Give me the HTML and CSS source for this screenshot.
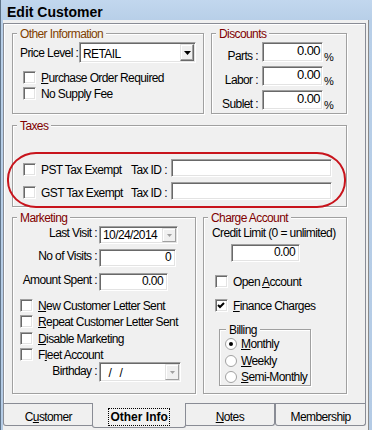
FILE: index.html
```html
<!DOCTYPE html>
<html>
<head>
<meta charset="utf-8">
<title>Edit Customer</title>
<link rel="stylesheet" href="styles.css">
</head>
<body>
<div class="window">
  <div class="titlebar">Edit Customer</div>
  <div class="client">
    <div class="page">
      <div class="row row1">
        <div class="group g-other">
          <div class="legend brown">Other Information</div>
          <div class="price">
            <span class="lbl">Price Level :</span>
            <div class="input combo combo-price">
              <span class="val">RETAIL</span>
              <span class="dd"><svg width="7" height="4" viewBox="0 0 7 4"><polygon points="0,0 7,0 3.5,4" fill="#000"/></svg></span>
            </div>
          </div>
          <div class="checks checks-other">
            <div class="chk"><span class="box"></span><span><u>P</u>urchase Order Required</span></div>
            <div class="chk"><span class="box"></span><span>No Supply Fee</span></div>
          </div>
        </div>
        <div class="group g-disc">
          <div class="legend">Discounts</div>
          <div class="disc-rows">
            <div class="disc-row"><span class="dlbl">Parts :</span><span class="input num dinput">0.00</span><span class="pct">%</span></div>
            <div class="disc-row"><span class="dlbl">Labor :</span><span class="input num dinput">0.00</span><span class="pct">%</span></div>
            <div class="disc-row"><span class="dlbl">Sublet :</span><span class="input num dinput">0.00</span><span class="pct">%</span></div>
          </div>
        </div>
      </div>

      <div class="group g-tax">
        <div class="legend">Taxes</div>
        <div class="tax-rows">
          <div class="tax-row"><span class="box"></span><span class="tname">PST Tax Exempt</span><span class="tid">Tax ID :</span><span class="input tinput"></span></div>
          <div class="tax-row"><span class="box"></span><span class="tname">GST Tax Exempt</span><span class="tid">Tax ID :</span><span class="input tinput"></span></div>
        </div>
        <div class="annot"></div>
      </div>

      <div class="row row3">
        <div class="group g-mkt">
          <div class="legend">Marketing</div>
          <div class="mrow mrow-visit">
            <span class="mlbl">Last Visit :</span>
            <div class="input combo combo-visit">
              <span class="val">10/24/2014</span>
              <span class="dd dd-dis"><svg width="5" height="3" viewBox="0 0 5 3"><polygon points="0,0 5,0 2.5,3" fill="#a0a0a0"/></svg></span>
            </div>
          </div>
          <div class="mrow mrow-count">
            <span class="mlbl">No of Visits :</span>
            <span class="input num minput w77">0</span>
          </div>
          <div class="mrow mrow-amt">
            <span class="mlbl">Amount Spent :</span>
            <span class="input num minput w69">0.00</span>
          </div>
          <div class="checks checks-mkt">
            <div class="chk"><span class="box"></span><span><u>N</u>ew Customer Letter Sent</span></div>
            <div class="chk c2"><span class="box"></span><span><u>R</u>epeat Customer Letter Sent</span></div>
            <div class="chk c3"><span class="box"></span><span><u>D</u>isable Marketing</span></div>
            <div class="chk c2"><span class="box"></span><span>F<u>l</u>eet Account</span></div>
          </div>
          <div class="mrow mrow-bday">
            <span class="mlbl">Birthday :</span>
            <div class="input combo combo-bday">
              <span class="val bval">  /   /</span>
              <span class="dd dd-dis"><svg width="5" height="3" viewBox="0 0 5 3"><polygon points="0,0 5,0 2.5,3" fill="#a0a0a0"/></svg></span>
            </div>
          </div>
        </div>
        <div class="group g-charge">
          <div class="legend">Charge Account</div>
          <div class="credit">Credit Limit (0 = unlimited)</div>
          <span class="input num cinput">0.00</span>
          <div class="chk open"><span class="box"></span><span>Open <u>A</u>ccount</span></div>
          <div class="chk fin"><span class="box"><svg width="11" height="11" viewBox="0 0 11 11"><polyline points="2,5 4,7 8,3" fill="none" stroke="#000" stroke-width="2"/></svg></span><span><u>F</u>inance Charges</span></div>
          <div class="group g-bill">
            <div class="legend blk">Billing</div>
            <div class="radio r1"><svg class="rb" width="12" height="12" viewBox="0 0 12 12"><circle cx="6" cy="6" r="5.5" fill="#fff" stroke="#a0a0a0"/><circle cx="6" cy="6" r="2" fill="#000"/></svg><span><u>M</u>onthly</span></div>
            <div class="radio r2"><svg class="rb" width="12" height="12" viewBox="0 0 12 12"><circle cx="6" cy="6" r="5.5" fill="#fff" stroke="#a0a0a0"/></svg><span><u>W</u>eekly</span></div>
            <div class="radio r3"><svg class="rb" width="12" height="12" viewBox="0 0 12 12"><circle cx="6" cy="6" r="5.5" fill="#fff" stroke="#a0a0a0"/></svg><span><u>S</u>emi-Monthly</span></div>
          </div>
        </div>
      </div>
    </div>
    <div class="tabs">
      <div class="tab">C<u>u</u>stomer</div>
      <div class="tab sel"><span class="focus">Other Info</span></div>
      <div class="tab"><u>N</u>otes</div>
      <div class="tab">Membership</div>
    </div>
  </div>
</div>
</body>
</html>
```
FILE: styles.css
```css
* { box-sizing: border-box; }
html, body { margin: 0; padding: 0; }
body {
  width: 372px; height: 430px; overflow: hidden;
  background: #f0f0f0;
  font-family: "Liberation Sans", Arial, sans-serif;
  font-size: 12px; line-height: 14px; color: #000;
  letter-spacing: -0.6px;
  white-space: nowrap;
}
u { text-decoration: underline; text-underline-offset: 1px; }

.window {
  width: 372px; height: 430px;
  display: flex; flex-direction: column;
  background: linear-gradient(180deg, #c2d7ee 0, #b8cfe8 20px, #b4cbe5 100%);
  border-left: 1px solid #61758a;
  padding: 0 3px 0 2px;
}
.titlebar {
  height: 20px; flex: none;
  padding: 5px 0 0 4px;
  font: bold 14px/14px "Liberation Sans", Arial, sans-serif;
  letter-spacing: 0;
  color: #000;
}
.client {
  flex: 1;
  background: #f0f0f0;
  padding: 3px 2px 0 0;
  border-right: 1px solid #8a8a8a;
  display: flex; flex-direction: column;
}
.page {
  border: 1px solid #898c95;
  box-shadow: inset 1px 1px 0 #fff;
  padding: 9px 18px 9px 8px;
  position: relative;
}

.row { display: flex; gap: 7px; }
.row1 { height: 81px; }
.row3 { height: 177px; margin-top: 10px; }

.group {
  border: 1px solid #a0a0a0;
  box-shadow: inset 1px 1px 0 #fff, 1px 1px 0 #fff;
  position: relative;
}
.legend {
  width: max-content;
  margin: -7px 0 0 4px;
  padding: 0 3px;
  background: #f0f0f0;
  color: #800000;
  line-height: 14px;
}
.legend.brown { color: #804000; }
.legend.blk { color: #000; margin-left: 6px; }

.g-other { width: 192px; }
.g-disc { width: 136px; }
.g-tax { height: 82px; margin-top: 11px; }
.g-mkt { width: 184px; }
.g-charge { width: 144px; }

/* controls */
.input {
  display: block;
  background: #fff;
  border: 1px solid;
  border-color: #a0a0a0 #fff #fff #a0a0a0;
  box-shadow: inset 1px 1px 0 #696969, inset -1px -1px 0 #e3e3e3;
  padding: 1px 4px 0 4px;
  line-height: 12px;
  font-size: 12px;
}
.num { text-align: right; }
.box {
  width: 13px; height: 13px; flex: none;
  background: #fff;
  border: 1px solid;
  border-color: #a0a0a0 #fff #fff #a0a0a0;
  box-shadow: inset 1px 1px 0 #696969, inset -1px -1px 0 #e3e3e3;
  display: flex; align-items: center; justify-content: center;
}
.box svg { display: block; }
.combo { display: flex; padding: 1px; }
.combo .val { flex: 1; padding: 1px 0 0 2px; }
.dd {
  width: 14px; flex: none;
  background: #f0f0f0;
  border: 1px solid;
  border-color: #e3e3e3 #696969 #696969 #e3e3e3;
  box-shadow: inset -1px -1px 0 #a0a0a0, inset 1px 1px 0 #fff;
  display: flex; align-items: center; justify-content: center;
}
.dd svg { display: block; }
.dd-dis { border-color: #e3e3e3 #a0a0a0 #a0a0a0 #e3e3e3; box-shadow: inset 1px 1px 0 #fff; }

.chk { display: flex; align-items: center; height: 13px; gap: 5px; }

/* other info */
.price { display: flex; align-items: center; height: 21px; margin-top: 1px; padding-left: 7px; }
.price .lbl { width: 59px; }
.combo-price { width: 117px; height: 21px; }
.combo-price .val { padding-top: 3px; line-height: 14px; }
.checks-other { margin-top: 8px; padding-left: 10px; display: flex; flex-direction: column; gap: 3px; }

/* discounts */
.disc-rows { margin-top: 1px; display: flex; flex-direction: column; gap: 4px; }
.disc-row { display: flex; height: 20px; }
.dlbl { width: 46px; text-align: right; align-self: flex-end; line-height: 14px; margin-bottom: -1px; }
.dinput { width: 61px; height: 20px; margin-left: 4px; font-size: 13px; line-height: 13px; padding-top: 1px; padding-right: 2px; }
.pct { align-self: flex-end; font-size: 11px; line-height: 12px; margin-left: 1px; margin-bottom: -1px; }

/* taxes */
.tax-rows { margin-top: 26px; padding-left: 10px; display: flex; flex-direction: column; gap: 5px; }
.tax-row { display: flex; align-items: flex-end; height: 18px; }
.tax-row .box { margin-bottom: 1px; }
.tname { width: 90px; margin-left: 5px; line-height: 14px; }
.tid { width: 40px; line-height: 14px; }
.tinput { width: 161px; height: 18px; }
.annot {
  position: absolute;
  left: -6px; top: 26px;
  width: 339px; height: 56px;
  border: 2px solid #c8141c;
  border-radius: 29px / 27px;
}

/* marketing */
.mrow { display: flex; align-items: flex-start; height: 18px; }
.mrow-visit { margin-top: 1px; }
.mrow-count { margin-top: 5px; }
.mrow-amt { margin-top: 6px; }
.mlbl { width: 86px; padding-right: 2px; text-align: right; line-height: 14px; }
.combo-visit { width: 79px; height: 18px; }
.minput { height: 18px; }
.w77 { width: 77px; }
.w69 { width: 69px; }
.checks-mkt { margin-top: 8px; padding-left: 7px; display: flex; flex-direction: column; }
.checks-mkt .c2 { margin-top: 3px; }
.checks-mkt .c3 { margin-top: 4px; }
.mrow-bday { margin-top: 1px; height: 20px; }
.mrow-bday .mlbl { margin-top: 2px; }
.combo-bday { width: 82px; height: 20px; }
.bval { white-space: pre; padding-top: 3px !important; }

/* charge */
.credit { margin-top: 1px; padding-left: 8px; line-height: 14px; }
.cinput { width: 69px; height: 18px; margin: 4px 0 0 27px; }
.chk.open { margin-top: 13px; padding-left: 11px; }
.chk.fin { margin-top: 11px; padding-left: 11px; }
.g-bill { width: 92px; height: 57px; margin: 17px 0 0 15px; }
.radio { display: flex; align-items: center; height: 14px; gap: 4px; padding-left: 5px; }
.radio .rb { display: block; flex: none; }
.r2 { margin-top: 3px; }
.r3 { margin-top: 2px; }

/* tabs */
.tabs { display: flex; height: 25px; flex: none; }
.tab {
  width: 91px; height: 22px;
  border: 1px solid #898c95;
  border-top: none;
  border-radius: 0 0 3px 3px;
  text-align: center;
  padding-top: 6px;
  line-height: 14px;
  background: #f0f0f0;
}
.tab.sel {
  width: 95px; height: 25px;
  margin: -1px -2px 0;
  position: relative; z-index: 1;
  font: bold 12px/14px "Liberation Sans", Arial, sans-serif;
  letter-spacing: 0;
  padding-top: 7px;
}
.focus { outline: 1px dotted #000; outline-offset: 1px; }
```
